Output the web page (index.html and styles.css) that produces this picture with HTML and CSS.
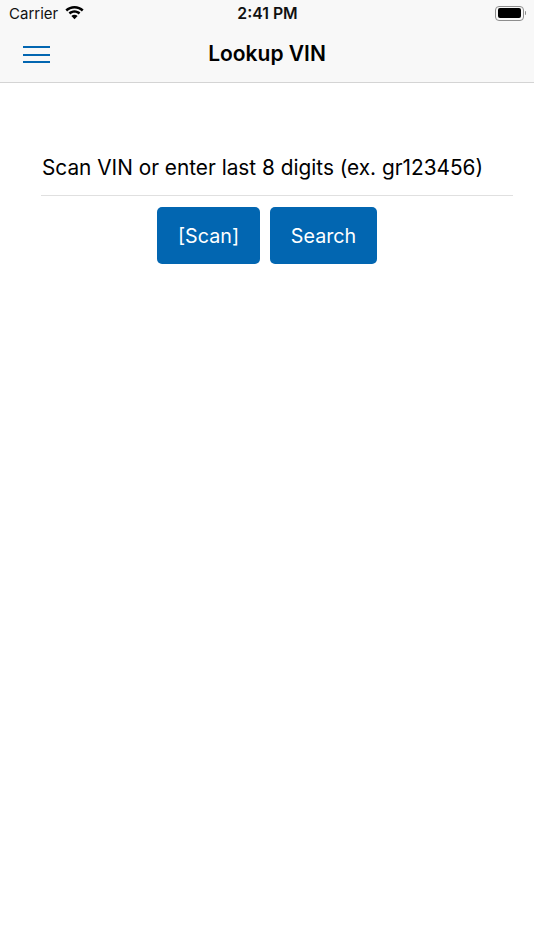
FILE: index.html
```html
<!DOCTYPE html>
<html lang="en">
<head>
<meta charset="utf-8">
<title>Lookup VIN</title>
<link rel="stylesheet" href="styles.css">
</head>
<body>
<header class="top">
  <div class="status">
    <div class="status-left">
      <span class="carrier">Carrier</span>
      <svg class="wifi" width="19" height="14" viewBox="0 0 19 14"><path d="M9.500 0C6 0 2.800 1.300.4 3.600l1.700 1.800c2-1.800 4.500-2.900 7.400-2.900s5.400 1.100 7.400 2.900l1.700-1.800C16.200 1.300 13 0 9.500 0z"/><path d="M9.500 4.300c-2.300 0-4.300.9-5.900 2.300l1.700 1.800c1.100-1 2.600-1.600 4.200-1.600s3.100.6 4.200 1.600l1.700-1.800c-1.600-1.400-3.600-2.300-5.900-2.300z"/><path d="M9.500 8.700c-1.200 0-2.300.4-3.100 1.200l3.100 3.400 3.100-3.400c-.8-.8-1.900-1.200-3.100-1.200z"/></svg>
    </div>
    <span class="time">2:41 PM</span>
    <div class="battery"><span class="battery-body"><span class="battery-fill"></span></span><span class="battery-cap"></span></div>
  </div>
  <div class="nav">
    <button class="menu" aria-label="Menu"><span></span><span></span><span></span></button>
    <h1 class="title">Lookup VIN</h1>
  </div>
</header>
<main class="content">
  <div class="field">Scan VIN or enter last 8 digits (ex. gr123456)</div>
  <div class="actions">
    <button class="btn btn-scan">[Scan]</button>
    <button class="btn btn-search">Search</button>
  </div>
</main>
</body>
</html>
```
FILE: styles.css
```css
* { box-sizing: border-box; }
html, body { margin: 0; padding: 0; background: #fff; }
body { width: 534px; height: 950px; font-family: Inter, "Liberation Sans", sans-serif; color: #000; overflow: hidden; }
.top { height: 83px; background: #f8f8f8; border-bottom: 1px solid #d4d4d4; display: flex; flex-direction: column; }
.status { height: 28px; display: grid; grid-template-columns: 1fr auto 1fr; align-items: center; padding: 0 8px 1px 9px; }
.status-left { display: flex; align-items: center; gap: 7px; }
.carrier { font-size: 15px; color: #111; }
.wifi { fill: #000; margin-top: -1px; }
.time { font-size: 15.8px; font-weight: 600; color: #111; }
.battery { justify-self: end; display: flex; align-items: center; gap: 1px; margin-top: -1px; }
.battery-body { width: 28.500px; height: 15px; border: 1px solid #8e8e8e; border-radius: 4px; padding: 1.500px; display: block; }
.battery-fill { display: block; width: 100%; height: 100%; background: #000; border-radius: 2px; }
.battery-cap { width: 1.500px; height: 4px; background: #8e8e8e; border-radius: 0 1px 1px 0; }
.nav { flex: 1; position: relative; display: flex; align-items: center; justify-content: center; padding-bottom: 3px; }
.title { margin: 0; font-size: 21px; font-weight: 600; letter-spacing: 0; }
.menu { position: absolute; left: 23px; top: 18px; width: 27px; height: 17px; padding: 0; border: 0; background: none; display: flex; flex-direction: column; justify-content: space-between; }
.menu span { display: block; height: 2px; background: #0266b1; border-radius: 0; }
.content { padding-top: 71px; }
.field { height: 42px; margin: 0 21px 0 41px; border-bottom: 1px solid #e0e0e0; padding: 1px 0 0 1px; font-size: 20.8px; line-height: 26px; white-space: nowrap; }
.actions { display: flex; justify-content: center; gap: 10px; margin-top: 11px; }
.btn { height: 57px; border: 0; border-radius: 5px; background: #0266b1; color: #fff; font: 400 19.700px Inter, "Liberation Sans", sans-serif; padding: 1px 0 0; }
.btn-scan { width: 103px; }
.btn-search { width: 107px; }
```
